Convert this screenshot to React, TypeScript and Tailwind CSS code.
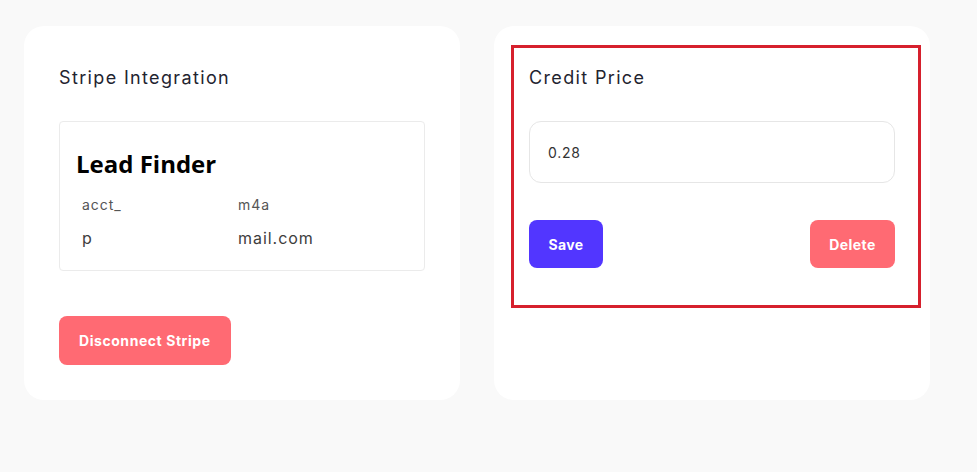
const poppins = { fontFamily: '"Inter", "Open Sans", sans-serif' };

const StripeCard: React.FC = () => {
    return (
        <div className="flex flex-col rounded-[20px] bg-white px-[35px] pt-[38px] pb-[35px]">
            <h2 className="text-[18px] leading-[27px] tracking-[0.075em] text-[#1f2430]">Stripe Integration</h2>
            <div className="mt-[30px] rounded-[4px] border border-[#ebebeb] pl-4 pt-[26px] pb-[20px]">
                <h3 className="text-[24px] leading-[32px] font-bold text-black" style={{ fontFamily: '"Open Sans", sans-serif' }}>
                    Lead Finder
                </h3>
                <div className="mt-[15px] grid grid-cols-[156px_1fr] pl-[6px] tracking-[0.06em] text-[#3d3d3d]">
                    <span className="text-[14px] leading-[20px] text-[#555]">acct_</span>
                    <span className="text-[14px] leading-[20px] text-[#555]">m4a</span>
                    <span className="mt-[11px] text-[16px] leading-[24px]">p</span>
                    <span className="mt-[11px] text-[16px] leading-[24px]">mail.com</span>
                </div>
            </div>
            <div className="mt-[45px]">
                <button className="h-[49px] rounded-[8px] bg-[#ff6a73] px-[20px] text-[14px] font-bold tracking-[0.04em] text-white">
                    Disconnect Stripe
                </button>
            </div>
        </div>
    );
};

const CreditCard: React.FC = () => {
    return (
        <div className="rounded-[20px] bg-white pt-[19px] pl-[17px] pr-[9px]">
            <div className="border-[3px] border-[#d6202d] pl-[15px] pr-[23px] pt-[16px] pb-[37px]">
                <h2 className="text-[18px] leading-[27px] tracking-[0.075em] text-[#1f2430]">Credit Price</h2>
                <div className="mt-[30px] flex h-[62px] items-center rounded-[12px] border border-[#e6e6e6] px-[18px] text-[14px] tracking-[0.05em] text-[#333]">
                    0.28
                </div>
                <div className="mt-[37px] flex items-center justify-between">
                    <button className="h-[48px] w-[74px] rounded-[8px] bg-[#5236ff] text-[14px] font-bold tracking-[0.03em] text-white">
                        Save
                    </button>
                    <button className="h-[48px] w-[85px] rounded-[8px] bg-[#ff6a73] text-[14px] font-bold tracking-[0.03em] text-white">
                        Delete
                    </button>
                </div>
            </div>
        </div>
    );
};

const App: React.FC = () => {
    return (
        <div className="min-h-screen bg-[#f9f9f9] pl-[24px] pt-[26px]" style={poppins}>
            <div className="grid w-[906px] grid-cols-2 gap-[34px]">
                <StripeCard />
                <CreditCard />
            </div>
        </div>
    );
};

export default App;
